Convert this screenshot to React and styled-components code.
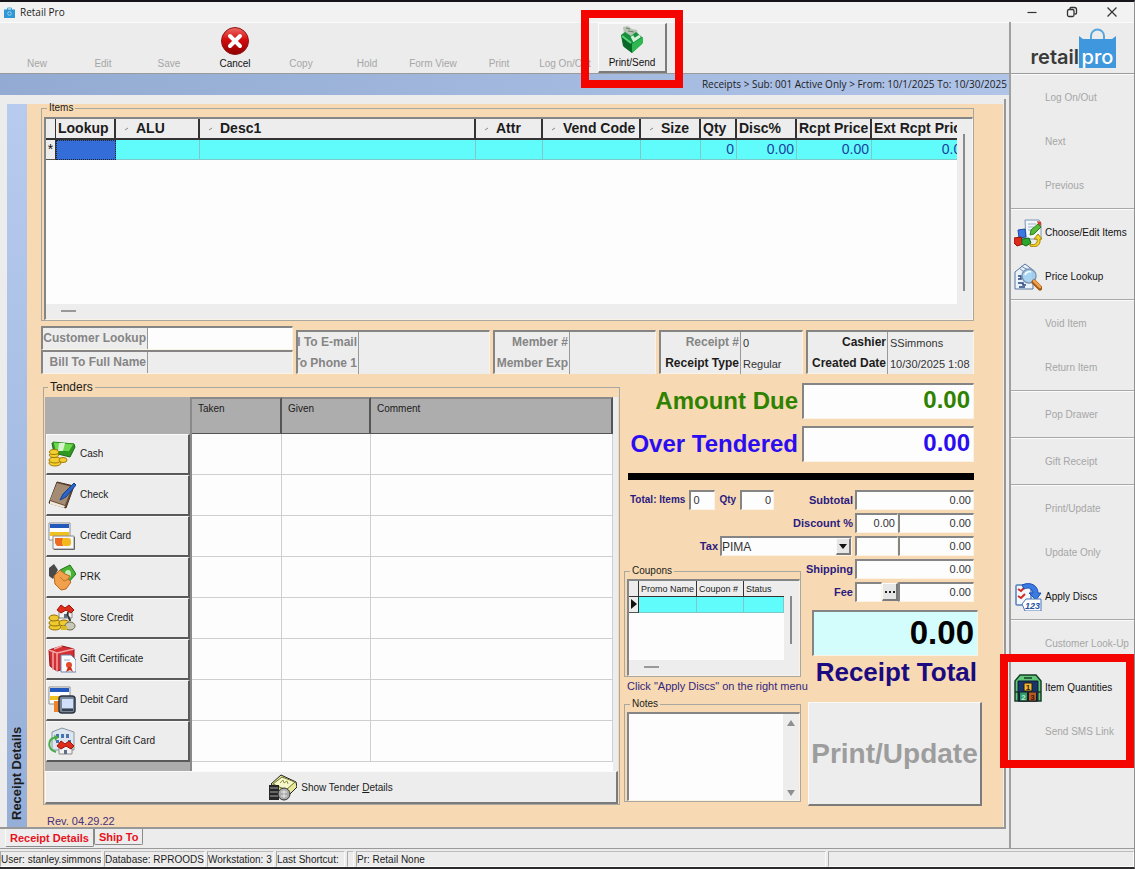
import React from "react";
import styled, { createGlobalStyle, css } from "styled-components";

const GlobalStyle = createGlobalStyle`
  * {
    box-sizing: border-box;
  }
  body {
    margin: 0;
    background: #ececec;
    color: #1c1c1c;
    font-family: "Liberation Sans", Arial, sans-serif;
    font-size: 10px;
    line-height: 12px;
  }
  button, input, select, textarea {
    font: inherit;
    color: inherit;
    border-radius: 0;
    margin: 0;
  }
`;

const toolbarItems = [
  { label: "New" },
  { label: "Edit" },
  { label: "Save" },
  { label: "Cancel", icon: CancelIcon },
  { label: "Copy" },
  { label: "Hold" },
  { label: "Form View" },
  { label: "Print" },
  { label: "Log On/Out" },
  { label: "Print/Send", icon: PrintSendIcon, raised: true, marked: true },
];

const sideGroups = [
  [{ label: "Log On/Out" }, { label: "Next" }, { label: "Previous" }],
  [
    { label: "Choose/Edit Items", icon: ChooseIcon },
    { label: "Price Lookup", icon: PriceIcon },
  ],
  [{ label: "Void Item" }, { label: "Return Item" }],
  [{ label: "Pop Drawer" }],
  [{ label: "Gift Receipt" }],
  [
    { label: "Print/Update" },
    { label: "Update Only" },
    { label: "Apply Discs", icon: DiscsIcon },
  ],
];

const itemColumns = [
  { label: "Lookup", width: 60 },
  { label: "ALU", width: 84, sortable: true },
  { label: "Desc1", sortable: true },
  { label: "Attr", width: 67, sortable: true },
  { label: "Vend Code", width: 98, sortable: true },
  { label: "Size", width: 60, sortable: true },
  { label: "Qty", width: 36, value: "0" },
  { label: "Disc%", width: 60, value: "0.00" },
  { label: "Rcpt Price", width: 75, value: "0.00" },
  { label: "Ext Rcpt Price", width: 100, value: "0.00" },
];

const tenders = [
  { label: "Cash", icon: CashIcon },
  { label: "Check", icon: CheckIcon },
  { label: "Credit Card", icon: CreditIcon },
  { label: "PRK", icon: HandIcon },
  { label: "Store Credit", icon: StoreCreditIcon },
  { label: "Gift Certificate", icon: GiftIcon },
  { label: "Debit Card", icon: DebitIcon },
  { label: "Central Gift Card", icon: CentralIcon },
];

const infoBoxes = [
  {
    width: 194,
    labelWidth: 61,
    rows: [
      { id: "email", label: "Bill To E-mail", value: "" },
      { id: "phone", label: "Bill To Phone 1", value: "" },
    ],
  },
  {
    width: 163,
    labelWidth: 75,
    rows: [
      { id: "member", label: "Member #", value: "" },
      { id: "member-exp", label: "Member Exp", value: "" },
    ],
  },
  {
    width: 144,
    labelWidth: 80,
    rows: [
      { id: "receipt", label: "Receipt #", value: "0" },
      { id: "receipt-type", label: "Receipt Type", value: "Regular", dark: true },
    ],
  },
  {
    width: 168,
    labelWidth: 80,
    rows: [
      { id: "cashier", label: "Cashier", value: "SSimmons", dark: true },
      { id: "created", label: "Created Date", value: "10/30/2025 1:08", dark: true },
    ],
  },
];

const statusCells = [
  { text: "User: stanley.simmons", width: 102 },
  { text: "Database: RPROODS", width: 101 },
  { text: "Workstation: 3", width: 67 },
  { text: "Last Shortcut:", width: 69 },
  { text: "", width: 7 },
  { text: "Pr: Retail None" },
  { text: "", width: 306 },
];

function App() {
  return (
    <Window>
      <GlobalStyle />
      <TitleBar>
        <BagIcon />
        <Title>Retail Pro</Title>
        <WindowButton aria-label="Minimize">
          <svg width="12" height="12" viewBox="0 0 12 12">
            <path d="M1.500 6.500h9" stroke="#333" strokeWidth="1.200" />
          </svg>
        </WindowButton>
        <WindowButton aria-label="Restore">
          <svg width="12" height="12" viewBox="0 0 12 12" fill="none" stroke="#333" strokeWidth="1.300">
            <rect x="1.500" y="3.500" width="6.500" height="7" rx="1.500" />
            <path d="M4 3.200V2.500a1 1 0 0 1 1-1h3.500a2 2 0 0 1 2 2V7a1 1 0 0 1-1 1H8.500" />
          </svg>
        </WindowButton>
        <WindowButton aria-label="Close">
          <svg width="12" height="12" viewBox="0 0 12 12">
            <path d="M1.500 1.500l9 9M10.500 1.500l-9 9" stroke="#333" strokeWidth="1.200" />
          </svg>
        </WindowButton>
      </TitleBar>
      <Body>
        <Main>
          <Toolbar>
            {toolbarItems.map(({ label, icon: Icon, raised, marked }) => (
              <ToolButton key={label} $raised={raised} disabled={!Icon}>
                {Icon && <Icon />}
                <span>{label}</span>
                {marked && <ToolMark />}
              </ToolButton>
            ))}
          </Toolbar>
          <Breadcrumb>
            Receipts &gt; Sub: 001 Active Only &gt; From: 10/1/2025 To: 10/30/2025
          </Breadcrumb>
          <Frame>
            <Sheet>
              <SideTitle>Receipt Details</SideTitle>
              <Form>
                <ItemsPanel />
                <CustomerInfo />
                <Lower>
                  <TendersPanel />
                  <Summary />
                </Lower>
                <Revision>Rev. 04.29.22</Revision>
              </Form>
            </Sheet>
            <Tabs>
              <Tab $active>Receipt Details</Tab>
              <Tab>Ship To</Tab>
            </Tabs>
          </Frame>
        </Main>
        <Sidebar />
      </Body>
      <StatusBar>
        {statusCells.map((cell, i) => (
          <StatusCell key={i} $width={cell.width}>
            {cell.text}
          </StatusCell>
        ))}
      </StatusBar>
    </Window>
  );
}

function ItemsPanel() {
  return (
    <ItemsGroup>
      <Legend>Items</Legend>
      <GridBox $height={203}>
        <GridMain>
          <GridClip>
            <ItemsTable>
              <colgroup>
                <col width={10} />
                {itemColumns.map((c) => (
                  <col key={c.label} width={c.width} />
                ))}
              </colgroup>
              <thead>
                <tr>
                  <th aria-label="Row" />
                  {itemColumns.map((c) => (
                    <th key={c.label} scope="col">
                      {c.sortable && <SortMark />}
                      {c.label}
                    </th>
                  ))}
                </tr>
              </thead>
              <tbody>
                <tr>
                  <td>*</td>
                  {itemColumns.map((c) => (
                    <td key={c.label}>{c.value}</td>
                  ))}
                </tr>
              </tbody>
            </ItemsTable>
          </GridClip>
          <HScroll />
        </GridMain>
        <VScroll $top={15} $height={157} />
      </GridBox>
    </ItemsGroup>
  );
}

function CustomerInfo() {
  return (
    <InfoRow>
      <CustomerBoxes>
        <InfoBox>
          <InfoLine>
            <InfoLabel htmlFor="customer" $width={105}>Customer Lookup</InfoLabel>
            <InfoInput id="customer" $white />
          </InfoLine>
        </InfoBox>
        <InfoBox>
          <InfoLine>
            <InfoLabel htmlFor="bill-name" $width={105}>Bill To Full Name</InfoLabel>
            <InfoInput id="bill-name" readOnly />
          </InfoLine>
        </InfoBox>
      </CustomerBoxes>
      {infoBoxes.map((box) => (
        <InfoBox key={box.rows[0].id} $width={box.width} $low>
          {box.rows.map((row) => (
            <InfoLine key={row.id}>
              <InfoLabel htmlFor={row.id} $width={box.labelWidth} $dark={row.dark}>
                {row.label}
              </InfoLabel>
              <InfoInput id={row.id} defaultValue={row.value} readOnly />
            </InfoLine>
          ))}
        </InfoBox>
      ))}
    </InfoRow>
  );
}

function TendersPanel() {
  return (
    <TendersGroup>
      <Legend $large>Tenders</Legend>
      <TenderBody>
        <TenderButtons>
          {tenders.map(({ label, icon: Icon }) => (
            <TenderButton key={label}>
              <Icon />
              {label}
            </TenderButton>
          ))}
        </TenderButtons>
        <TenderTable>
          <colgroup>
            <col width={90} />
            <col width={89} />
            <col />
          </colgroup>
          <thead>
            <tr>
              <th scope="col">Taken</th>
              <th scope="col">Given</th>
              <th scope="col">Comment</th>
            </tr>
          </thead>
          <tbody>
            {tenders.map((t) => (
              <tr key={t.label}>
                <td />
                <td />
                <td />
              </tr>
            ))}
          </tbody>
        </TenderTable>
      </TenderBody>
      <ShowTenders>
        <TenderDetailsIcon />
        <span>
          Show Tender <u>D</u>etails
        </span>
      </ShowTenders>
    </TendersGroup>
  );
}

function Summary() {
  return (
    <SummaryColumn>
      <Totals>
        <BigRow $color="#2f8200">
          <label htmlFor="due">Amount Due</label>
          <BigInput id="due" defaultValue="0.00" />
        </BigRow>
        <BigRow $color="#2a0df0">
          <label htmlFor="over">Over Tendered</label>
          <BigInput id="over" defaultValue="0.00" />
        </BigRow>
        <Bar />
        <FieldRow>
          <CountFields>
            <label htmlFor="items">Total: Items</label>
            <Field id="items" defaultValue="0" $width={26} $left />
            <label htmlFor="qty">Qty</label>
            <Field id="qty" defaultValue="0" $width={34} />
          </CountFields>
          <FieldLabel htmlFor="subtotal">Subtotal</FieldLabel>
          <Field id="subtotal" defaultValue="0.00" $width={119} />
        </FieldRow>
        <FieldRow>
          <FieldLabel htmlFor="disc-pct">Discount %</FieldLabel>
          <Field id="disc-pct" defaultValue="0.00" $width={43} />
          <Field aria-label="Discount" defaultValue="0.00" $width={76} />
        </FieldRow>
        <FieldRow>
          <FieldLabel htmlFor="tax">Tax</FieldLabel>
          <SelectBox>
            <TaxSelect id="tax">
              <option>PIMA</option>
            </TaxSelect>
            <SelectArrow>
              <svg width="8" height="5" viewBox="0 0 8 5">
                <path d="M0 0h8L4 5z" fill="#111" />
              </svg>
            </SelectArrow>
          </SelectBox>
          <Field aria-label="Tax percent" $width={43} />
          <Field aria-label="Tax amount" defaultValue="0.00" $width={76} />
        </FieldRow>
      </Totals>
      <SummarySplit>
        <SplitLeft>
          <SmallGroup>
            <Legend>Coupons</Legend>
            <GridBox $height={97}>
              <GridMain>
                <GridClip>
                  <CouponTable>
                    <colgroup>
                      <col width={10} />
                      <col width={58} />
                      <col width={47} />
                      <col />
                    </colgroup>
                    <thead>
                      <tr>
                        <th aria-label="Row" />
                        <th scope="col">Promo Name</th>
                        <th scope="col">Coupon #</th>
                        <th scope="col">Status</th>
                      </tr>
                    </thead>
                    <tbody>
                      <tr>
                        <td>
                          <svg width="6" height="10" viewBox="0 0 6 10">
                            <path d="M0 0l6 5-6 5z" fill="#111" />
                          </svg>
                        </td>
                        <td />
                        <td />
                        <td />
                      </tr>
                    </tbody>
                  </CouponTable>
                </GridClip>
                <HScroll />
              </GridMain>
              <VScroll $top={15} $height={48} />
            </GridBox>
          </SmallGroup>
          <Hint>Click "Apply Discs" on the right menu</Hint>
          <SmallGroup>
            <Legend id="notes-label">Notes</Legend>
            <NotesBox>
              <Notes aria-labelledby="notes-label" />
              <NotesScroll>
                <svg width="8" height="6" viewBox="0 0 8 6">
                  <path d="M0 6l4-6 4 6z" fill="#8f8f8f" />
                </svg>
                <svg width="8" height="6" viewBox="0 0 8 6">
                  <path d="M0 0l4 6 4-6z" fill="#8f8f8f" />
                </svg>
              </NotesScroll>
            </NotesBox>
          </SmallGroup>
        </SplitLeft>
        <SplitRight>
          <Fees>
            <FieldRow>
              <FieldLabel htmlFor="shipping">Shipping</FieldLabel>
              <Field id="shipping" defaultValue="0.00" $width={119} />
            </FieldRow>
            <FieldRow>
              <FieldLabel htmlFor="fee">Fee</FieldLabel>
              <Field aria-label="Fee type" $width={27} />
              <MoreButton aria-label="Choose fee">
                <svg width="10" height="2" viewBox="0 0 10 2">
                  <path d="M0 0h2v2H0zM4 0h2v2H4zM8 0h2v2H8z" fill="#222" />
                </svg>
              </MoreButton>
              <Field id="fee" defaultValue="0.00" $width={76} />
            </FieldRow>
          </Fees>
          <TotalInput id="total" defaultValue="0.00" />
          <TotalLabel htmlFor="total">Receipt Total</TotalLabel>
          <UpdateButton disabled>Print/Update</UpdateButton>
        </SplitRight>
      </SummarySplit>
    </SummaryColumn>
  );
}

function Sidebar() {
  return (
    <Side>
      <Logo>
        <span>retail</span>
        <LogoBag>
          <svg width="37" height="14" viewBox="0 0 37 14">
            <path d="M12 12V8a6.500 6.500 0 0 1 13 0v4" fill="none" stroke="#56a6e0" strokeWidth="2" />
            <path d="M0 14V8l4 3h29l4-3v6z" fill="#3f98dd" />
          </svg>
          <span>pro</span>
        </LogoBag>
      </Logo>
      {sideGroups.map((group) => (
        <SideGroup key={group[0].label}>
          {group.map((item) => (
            <SideItem key={item.label} {...item} />
          ))}
        </SideGroup>
      ))}
      <SideGroup $last>
        <SideItem label="Customer Look-Up" />
        <MarkedItems>
          <SideItem label="Item Quantities" icon={QuantityIcon} />
          <SideItem label="Send SMS Link" />
          <SideMark />
        </MarkedItems>
      </SideGroup>
    </Side>
  );
}

function SideItem({ label, icon: Icon }) {
  return (
    <SideButton disabled={!Icon}>
      <SideIcon>{Icon && <Icon />}</SideIcon>
      {label}
    </SideButton>
  );
}

/* ---------- icons ---------- */

function Art({ children }) {
  return (
    <svg width="28" height="28" viewBox="0 0 28 28" aria-hidden="true">
      {children}
    </svg>
  );
}

function SortMark() {
  return (
    <SortSvg width="5" height="5" viewBox="0 0 5 5">
      <path d="M1 4l3-2" stroke="#888" />
    </SortSvg>
  );
}

function BagIcon() {
  return (
    <svg width="11" height="11" viewBox="0 0 11 11" aria-hidden="true">
      <path d="M3.500 3V1h4v2" fill="none" stroke="#4aa8de" />
      <path d="M0 2.500h11V11H0z" fill="#2f97d4" />
      <circle cx="5.500" cy="6.500" r="1.800" fill="none" stroke="#9bd2f2" />
    </svg>
  );
}

function CancelIcon() {
  return (
    <Art>
      <defs>
        <linearGradient id="cancel-red" x1="0" y1="0" x2="0" y2="1">
          <stop offset="0" stopColor="#ee6b66" />
          <stop offset="0.450" stopColor="#d40d0d" />
          <stop offset="1" stopColor="#8e0000" />
        </linearGradient>
      </defs>
      <circle cx="14" cy="14" r="13.500" fill="url(#cancel-red)" stroke="#8d1515" />
      <path d="M9 9l10 10M19 9L9 19" stroke="#fff" strokeWidth="4" strokeLinecap="round" />
    </Art>
  );
}

function PrintSendIcon() {
  return (
    <Art>
      <path d="M5 1l5-1 4 3 5 1 1 5-9 3-5-4z" fill="#b5c4b4" />
      <path d="M8 2l4 1M10 5l6 1" stroke="#6c7d6b" />
      <path d="M3 9l4-3 6 4 5-4 7 6-1 6-10 9-8-6z" fill="#15913a" />
      <path d="M3 9l11 9v9l-9-7z" fill="#0a6a29" />
      <path d="M14 18l11-7v6l-11 10z" fill="#2db950" />
      <path d="M14 10l2 4 6-4" stroke="#d4f0d9" strokeWidth="3" fill="none" />
      <path d="M4 10l9 7" stroke="#5bd27c" strokeWidth="2" />
    </Art>
  );
}

function ChooseIcon() {
  return (
    <Art>
      <path d="M11 1h14l2 3v16H12z" fill="#f3f7fc" stroke="#7f94b2" />
      <path d="M14 5h8M14 8h6M14 11h4" stroke="#9fb1c9" />
      <path d="M23 2l4 1v4l-3-2z" fill="#d73d2a" />
      <path d="M16 16l1-5 7-6 3 3-7 7z" fill="#55bb38" stroke="#2d7d1a" />
      <path d="M4 11l7-1 1 8-7 1z" fill="#3b78e0" stroke="#1d4ca8" />
      <path d="M0 19l7-1 2 7-6 2-3-3z" fill="#dc2a1c" stroke="#971308" />
      <path d="M8 20l7-1 2 5-5 3-4-2z" fill="#2da52c" stroke="#136a13" />
      <path d="M16 25c5 2 8-1 7-5h-3l4-5 4 5h-2c1 7-5 9-10 7z" fill="#f4d32b" stroke="#a98405" />
    </Art>
  );
}

function PriceIcon() {
  return (
    <Art>
      <path d="M1 9l10-8 8 6v19H1z" fill="#eaf2fb" stroke="#56769f" />
      <path d="M5 5l5 4 8-2M7 3l7 4" stroke="#6c8bb0" fill="none" />
      <path d="M4 13h3v3H4M4 20h5v2h3M5 24h6" stroke="#27457c" fill="none" strokeWidth="1.500" />
      <circle cx="15" cy="13" r="7" fill="#9fd0f1" fillOpacity="0.900" stroke="#7c96b4" strokeWidth="1.500" />
      <path d="M11 12c1-3 4-4 6-3" stroke="#fff" fill="none" strokeWidth="1.500" />
      <path d="M20 19l6 6" stroke="#a35816" strokeWidth="5" strokeLinecap="round" />
      <path d="M20 18l6 6" stroke="#efa24c" strokeWidth="2.500" strokeLinecap="round" />
    </Art>
  );
}

function DiscsIcon() {
  return (
    <Art>
      <rect x="2" y="2" width="15" height="20" rx="1" fill="#f2f7fd" stroke="#5480bd" strokeWidth="1.500" />
      <path d="M4 6l3 2 4-4M4 13l3 2 4-4" stroke="#d22b1f" strokeWidth="2" fill="none" />
      <path d="M8 2c9-4 16 1 16 8h3l-5 7-7-7h4c-1-5-5-6-9-4z" fill="#3b7be2" stroke="#1d4fb0" />
      <path d="M8 21l4-5h15v12H11z" fill="#fff" stroke="#4d75b7" />
      <text x="11" y="26" fontSize="9" fontStyle="italic" fontWeight="700" fill="#2450a4">123</text>
    </Art>
  );
}

function QuantityIcon() {
  return (
    <Art>
      <path d="M1 27V7l5-6h16l5 6v20z" fill="#63c97a" stroke="#163f26" strokeWidth="1.500" />
      <path d="M10 4h8M1 18h3M24 18h3" stroke="#163f26" strokeWidth="1.500" />
      <path d="M4 7h20v20H4z" fill="#1a356b" stroke="#101d33" />
      <path d="M10 9h8v8h-8z" fill="#f3b82c" stroke="#1c1c1c" />
      <path d="M5.500 18h8v9h-8z" fill="#2f9c71" stroke="#1c1c1c" />
      <path d="M14.500 18h8v9h-8z" fill="#b5592a" stroke="#1c1c1c" />
      <g fontSize="8" fontWeight="700" textAnchor="middle">
        <text x="14" y="16" fill="#222">1</text>
        <text x="9.500" y="26" fill="#b8f0cc">2</text>
        <text x="18.500" y="26" fill="#401808">3</text>
      </g>
    </Art>
  );
}

function CashIcon() {
  return (
    <Art>
      <path d="M4 3l22 1 1 3-5 10-16-4z" fill="#2f9a22" stroke="#1c6b14" />
      <path d="M5 2l21 2-5 8-14-2z" fill="#6cd84f" stroke="#2f8d20" />
      <path d="M11 3h6l-2 8h-5z" fill="#d9f3cf" />
      <g fill="#f3cf30" stroke="#a3790a">
        <ellipse cx="7" cy="23" rx="6" ry="3" />
        <ellipse cx="7" cy="20" rx="6" ry="3" />
        <ellipse cx="6" cy="15" rx="4.500" ry="2.500" />
        <ellipse cx="6" cy="12" rx="4.500" ry="2.500" />
        <ellipse cx="15" cy="20" rx="4" ry="2.500" />
      </g>
    </Art>
  );
}

function CheckIcon() {
  return (
    <Art>
      <path d="M9 1l17 4-8 22-17-5z" fill="#6b4d35" stroke="#45301f" />
      <path d="M9 2l15 4-7 18-15-5z" fill="#a48c74" />
      <path d="M2 20l15 5-1 2-14-4z" fill="#f1e8da" />
      <path d="M12 19l3-6L26 2l2 2-10 12z" fill="#2c63c9" stroke="#173f8c" />
    </Art>
  );
}

function CardArt() {
  return (
    <>
      <path d="M1 1h21v17H1z" fill="#fff" stroke="#8d8d8d" />
      <path d="M2 2h19v4H2z" fill="#2358bd" />
      <path d="M2 10h19v4H2z" fill="#f0bf20" />
    </>
  );
}

function CreditIcon() {
  return (
    <Art>
      <CardArt />
      <path d="M5 14h21v13H5z" fill="#f6f6f6" stroke="#8b8b8b" />
      <path d="M26.500 15v12.500H6" fill="none" stroke="#666" />
      <path d="M7 16h8v8H9l-2-3z" fill="#ee6a21" />
      <rect x="14" y="16" width="9" height="8" rx="3" fill="#f3b81e" />
    </Art>
  );
}

function DebitIcon() {
  return (
    <Art>
      <CardArt />
      <path d="M6 15h6v11H6z" fill="#ef8126" />
      <rect x="11" y="10" width="16" height="17" rx="3" fill="#79879a" stroke="#2b3340" strokeWidth="1.500" />
      <path d="M14 13h11v9H14z" fill="#cfe0f8" />
      <path d="M14 24h11" stroke="#222b38" strokeWidth="1.500" />
    </Art>
  );
}

function HandIcon() {
  return (
    <Art>
      <path d="M12 7l10-5 6 9-9 10z" fill="#48b436" stroke="#1e7215" />
      <ellipse cx="20" cy="11" rx="3" ry="4" fill="#c4ecb9" />
      <path d="M1 5l5-4 4 6-5 9-4-3z" fill="#4a4a4a" />
      <path d="M6 13l6-6 5 4 5 2-2 3 3 3-5 7-5 1-6-6z" fill="#f1a04b" stroke="#bb6820" />
      <path d="M12 14l4 4 5-2" stroke="#c1752d" fill="none" />
    </Art>
  );
}

function House({ x = 0, y = 0 }) {
  return (
    <g transform={`translate(${x} ${y})`}>
      <path d="M2 5h13v8H2z" fill="#f2f2f2" stroke="#8c8c8c" />
      <path d="M0 5l4-5 4 3 4-3 5 5-3 3-5-3-5 3z" fill="#e02d1b" stroke="#9d1206" />
      <path d="M7 9h3v4H7z" fill="#5c6f87" />
    </g>
  );
}

function StoreCreditIcon() {
  return (
    <Art>
      <House x={9} y={1} />
      <g fill="#eec930" stroke="#947006">
        <ellipse cx="7" cy="23" rx="6" ry="3" />
        <ellipse cx="7" cy="19" rx="6" ry="3" />
        <ellipse cx="6" cy="14" rx="5" ry="3" />
        <ellipse cx="16" cy="19" rx="5" ry="3" />
      </g>
      <path d="M20 8c-2 5 2 5 2 9" stroke="#333" strokeWidth="2" fill="none" />
      <ellipse cx="22" cy="22" rx="5" ry="4" fill="#c9c9b8" stroke="#696950" />
      <path d="M13 24h6" stroke="#dabc22" strokeWidth="4" />
    </Art>
  );
}

function GiftIcon() {
  return (
    <Art>
      <path d="M1 5l13-4 12 3v17l-17 5-7-5z" fill="#d23035" stroke="#951317" />
      <path d="M1 5l8 3v18M9 8l17-4M5 6v19M14 1l-8 3" stroke="#f5a3a3" fill="none" strokeWidth="1.500" />
      <path d="M13 10h10l5 5v12H13z" fill="#f8fbff" stroke="#6e86ab" />
      <path d="M16 15h6" stroke="#9eb2cd" />
      <circle cx="21" cy="20" r="3" fill="#e5482a" />
      <path d="M18 27l2-5h3l2 5-3-2z" fill="#cf2e14" />
    </Art>
  );
}

function CentralIcon() {
  return (
    <Art>
      <path d="M4 5l10-4 12 4v18H4z" fill="#dde6ee" stroke="#8796a5" />
      <path d="M8 7h3v4H8zM13 7h3v4h-3zM18 7h3v4h-3zM8 13h3v3H8zM20 13h3v3h-3z" fill="#4674b0" />
      <House x={9} y={14} />
      <path d="M8 25c-9-3-9-13 0-15" stroke="#48ad47" strokeWidth="2" fill="none" />
      <path d="M6 8l5 2-4 4z" fill="#48ad47" />
    </Art>
  );
}

function TenderDetailsIcon() {
  return (
    <Art>
      <path d="M2 10L12 1l15 7 1 5-10 10z" fill="#e6e89a" stroke="#222" />
      <path d="M4 10L13 3l13 5-9 8z" fill="#f5f7c8" stroke="#6d6f2c" />
      <path d="M11 9l3-3 1 3 3-2 1 3" stroke="#92954a" fill="none" />
      <path d="M0 11h10v15H0z" fill="#262626" />
      <path d="M1 14h8M1 18h8M1 22h8" stroke="#a8a8a8" />
      <circle cx="15" cy="20" r="6" fill="#aaa" stroke="#333" />
      <path d="M15 16v8M12 18h6M12 22h6" stroke="#e8e8e8" />
    </Art>
  );
}

/* ---------- styles ---------- */

const sunken = css`
  border: 1px solid #fbf3e6;
  border-top: 2px solid #858585;
  border-left: 2px solid #858585;
`;

const raised = css`
  border: 1px solid #fafafa;
  border-right: 2px solid #7b7b7b;
  border-bottom: 2px solid #7b7b7b;
`;

const Window = styled.div`
  display: flex;
  flex-direction: column;
  min-height: 100vh;
  border-top: 2px solid #17151a;
  border-bottom: 2px solid #2b292c;
  border-right: 1px solid #8f8f8f;
  background: #ececec;
`;

const TitleBar = styled.header`
  display: flex;
  align-items: center;
  height: 20px;
  padding: 0 2px 0 4px;
  background: #f2f2f2;
  font-family: "Open Sans", sans-serif;
`;

const Title = styled.h1`
  flex: 1;
  margin: 0;
  padding-left: 5px;
  font-size: 10px;
  font-weight: 400;
`;

const WindowButton = styled.button`
  display: flex;
  align-items: center;
  justify-content: center;
  width: 40px;
  height: 18px;
  padding: 0;
  border: 0;
  background: none;
`;

const Body = styled.div`
  display: flex;
  flex: 1;
`;

const Main = styled.main`
  display: flex;
  flex: 1;
  flex-direction: column;
  min-width: 0;
`;

const Toolbar = styled.nav`
  display: flex;
  height: 52px;
  padding-left: 4px;
  border-top: 1px solid #fbfbfb;
  border-bottom: 1px solid #9a9a9a;
`;

const ToolButton = styled.button`
  position: relative;
  display: flex;
  flex: 0 0 ${({ $raised }) => ($raised ? 69 : 66)}px;
  flex-direction: column;
  align-items: center;
  justify-content: flex-end;
  gap: 3px;
  padding: 0 0 3px;
  border: 0;
  background: none;
  color: #111;
  white-space: nowrap;
  ${({ $raised }) =>
    $raised &&
    css`
      ${raised}
      padding-bottom: 2px;
    `}
  &:disabled {
    color: #a6a6a6;
  }
`;

const ToolMark = styled.span`
  position: absolute;
  inset: -14px -18px -17px -18px;
  border: 8px solid #f40500;
  pointer-events: none;
`;

const Breadcrumb = styled.div`
  height: 21px;
  padding-right: 2px;
  background: linear-gradient(90deg, #93abd2, #b0c4e8);
  font: 10px/21px "Open Sans", sans-serif;
  text-align: right;
`;

const Frame = styled.div`
  display: flex;
  flex: 1;
  flex-direction: column;
  padding: 4px 3px 1px 0;
`;

const Sheet = styled.div`
  display: flex;
  flex: 1;
  padding: 5px 1px 0 7px;
  border-right: 2px solid #989898;
  border-bottom: 2px solid #989898;
`;

const SideTitle = styled.h2`
  flex: 0 0 20px;
  margin: 0;
  padding: 7px 0;
  background: linear-gradient(#96afd8, #b7cbee);
  font-size: 13px;
  line-height: 20px;
  writing-mode: vertical-rl;
  transform: rotate(180deg);
`;

const Form = styled.section`
  display: flex;
  flex: 1;
  flex-direction: column;
  min-width: 0;
  background: #f7dab3;
`;

const Group = styled.fieldset`
  min-width: 0;
  margin: 0;
  border: 1px solid #a8a8a0;
`;

const Legend = styled.legend`
  margin-left: 3px;
  padding: 0 2px;
  font-size: ${({ $large }) => ($large ? 12 : 10)}px;
  line-height: ${({ $large }) => ($large ? 12 : 8)}px;
`;

const ItemsGroup = styled(Group)`
  margin: 0 29px 0 14px;
  padding: 5px 0 0 2px;
`;

const GridBox = styled.div`
  ${sunken}
  display: flex;
  height: ${({ $height }) => $height}px;
  background: #ededed;
`;

const GridMain = styled.div`
  display: flex;
  flex: 1;
  flex-direction: column;
  min-width: 0;
`;

const GridClip = styled.div`
  flex: 1;
  overflow: hidden;
  background: #fdfdfd;
`;

const HScroll = styled.div`
  height: 15px;
  padding: 6px 0 0 15px;
  &::before {
    content: "";
    display: block;
    width: 15px;
    height: 2px;
    background: #999;
  }
`;

const VScroll = styled.div`
  width: 15px;
  padding: ${({ $top }) => $top}px 0 0 6px;
  &::before {
    content: "";
    display: block;
    width: 2px;
    height: ${({ $height }) => $height}px;
    background: #8a8a8a;
  }
`;

const DataTable = styled.table`
  border-collapse: separate;
  border-spacing: 0;
  table-layout: fixed;
  th,
  td {
    overflow: hidden;
    white-space: nowrap;
  }
  th {
    background: #ededed;
    text-align: left;
  }
  td {
    background: #60fcfc;
    border-right: 1px solid #7cc9c9;
    border-bottom: 1px solid #7cc9c9;
  }
  td:first-child {
    padding: 0 1px;
    background: #ededed;
    border-right: 1px solid #333;
    border-bottom: 1px solid #555;
    color: #111;
    text-align: center;
  }
`;

const ItemsTable = styled(DataTable)`
  width: calc(100% + 15px);
  font-size: 14px;
  th {
    height: 21px;
    padding: 0 0 0 2px;
    border-right: 2px solid #333;
    border-bottom: 2px solid #333;
    line-height: 19px;
  }
  th:first-child {
    border-right-width: 1px;
  }
  td {
    height: 20px;
    padding: 0 2px;
    color: #1d3f9e;
    line-height: 19px;
    text-align: right;
  }
  td:nth-child(2) {
    border: 1px dotted #222;
    background: #346cd8;
  }
`;

const SortSvg = styled.svg`
  margin: 0 7px 2px 6px;
`;

const InfoRow = styled.div`
  display: flex;
  align-items: flex-end;
  gap: 3px;
  margin: 5px 29px 0 14px;
`;

const CustomerBoxes = styled.div`
  flex: 1 1 252px;
`;

const InfoBox = styled.div`
  ${sunken}
  flex: 1 1 ${({ $width }) => $width || 252}px;
  min-width: 0;
  height: ${({ $low }) => ($low ? 44 : 24)}px;
  background: #ededed;
`;

const InfoLine = styled.div`
  display: flex;
  height: 21px;
`;

const InfoLabel = styled.label`
  display: flex;
  flex: 0 0 ${({ $width }) => $width}px;
  justify-content: flex-end;
  overflow: hidden;
  padding-right: 1px;
  border-right: 1px solid #999;
  color: ${({ $dark }) => ($dark ? "#1c1c1c" : "#858585")};
  font-size: 12px;
  font-weight: 700;
  line-height: 21px;
  white-space: nowrap;
`;

const InfoInput = styled.input`
  flex: 1;
  min-width: 0;
  padding: 0 0 0 2px;
  border: 0;
  background: ${({ $white }) => ($white ? "#fdfdfd" : "#ededed")};
  color: #333;
  font-size: 11px;
`;

const Lower = styled.div`
  display: flex;
  gap: 4px;
  padding: 0 21px 0 16px;
`;

const TendersGroup = styled(Group)`
  flex: 1;
  align-self: flex-start;
  margin-top: 7px;
  padding: 4px 1px 0;
`;

const TenderBody = styled.div`
  display: flex;
  height: 374px;
  border-right: 5px solid #ededed;
  background: #fdfdfd;
`;

const TenderButtons = styled.div`
  flex: 0 0 147px;
  padding: 37px 0 0 1px;
  background: #adadad;
  border-right: 2px solid #8a8a8a;
`;

const TenderButton = styled.button`
  display: flex;
  align-items: center;
  gap: 4px;
  width: 100%;
  height: 41px;
  padding: 0 3px 0 1px;
  border: 1px solid #fafafa;
  border-right: 2px solid #5a5a5a;
  border-bottom: 2px solid #5a5a5a;
  background: #ededed;
`;

const TenderTable = styled.table`
  flex: 1;
  align-self: flex-start;
  border-collapse: separate;
  border-spacing: 0;
  table-layout: fixed;
  display: table;
  width: 100%;
  th {
    height: 37px;
    padding: 4px 6px;
    border-top: 2px solid #8a8a8a;
    border-right: 2px solid #555;
    border-bottom: 1px solid #555;
    background: #adadad;
    font-weight: 400;
    text-align: left;
    vertical-align: top;
  }
  td {
    height: 41px;
    padding: 0;
    border-right: 1px solid #cfcfcf;
    border-bottom: 1px solid #cfcfcf;
  }
`;

const ShowTenders = styled.button`
  ${raised}
  display: flex;
  align-items: center;
  justify-content: center;
  gap: 4px;
  width: 100%;
  height: 33px;
  padding: 2px 0 0;
  background: #ededed;
`;

const SummaryColumn = styled.div`
  flex: 0 0 358px;
  min-width: 0;
  padding-top: 9px;
`;

const Totals = styled.div`
  padding: 0 8px 0 4px;
`;

const BigRow = styled.div`
  display: flex;
  align-items: center;
  justify-content: flex-end;
  gap: 4px;
  margin-bottom: 7px;
  color: ${({ $color }) => $color};
  font-size: 24px;
  font-weight: 700;
  white-space: nowrap;
`;

const BigInput = styled.input`
  ${sunken}
  width: 172px;
  height: 36px;
  padding: 0 3px 4px;
  background: #fdfdfd;
  line-height: 28px;
  text-align: right;
`;

const Bar = styled.div`
  height: 7px;
  margin: 11px 0 10px;
  background: #000;
`;

const FieldRow = styled.div`
  display: flex;
  align-items: center;
  justify-content: flex-end;
  height: 20px;
  margin-bottom: 3px;
`;

const FieldLabel = styled.label`
  padding-right: 2px;
  color: #2b1a80;
  font-size: 11px;
  font-weight: 700;
`;

const Field = styled.input`
  ${sunken}
  width: ${({ $width }) => $width}px;
  height: 20px;
  padding: 0 2px 2px;
  background: #fdfdfd;
  color: #333;
  font-size: 11px;
  font-weight: 400;
  text-align: ${({ $left }) => ($left ? "left" : "right")};
`;

const CountFields = styled.div`
  display: flex;
  align-items: center;
  gap: 4px;
  margin-right: auto;
  padding-left: 2px;
  color: #2b1a80;
  font-weight: 700;
`;

const SelectBox = styled.div`
  ${sunken}
  display: flex;
  width: 132px;
  height: 20px;
  margin-right: 3px;
  background: #fdfdfd;
`;

const TaxSelect = styled.select`
  flex: 1;
  padding: 0;
  border: 0;
  background: none;
  color: #333;
  font-size: 12px;
  appearance: none;
`;

const SelectArrow = styled.span`
  ${raised}
  display: flex;
  align-items: center;
  justify-content: center;
  width: 15px;
  background: #e6e6e6;
  pointer-events: none;
`;

const SummarySplit = styled.div`
  display: flex;
`;

const SplitLeft = styled.div`
  flex: 0 0 177px;
  min-width: 0;
  padding-top: 8px;
`;

const SmallGroup = styled(Group)`
  padding: 4px 0 0 2px;
`;

const CouponTable = styled(DataTable)`
  width: 100%;
  font-size: 9px;
  th {
    height: 16px;
    padding: 0 0 0 2px;
    border-right: 1px solid #333;
    border-bottom: 1px solid #333;
    font-weight: 400;
  }
  th:last-child {
    border-right: 0;
  }
  td {
    height: 16px;
    line-height: 10px;
  }
`;

const Hint = styled.p`
  margin: 2px 0 7px;
  padding-left: 3px;
  color: #33267e;
  font-size: 11px;
  line-height: 14px;
  white-space: nowrap;
`;

const NotesBox = styled.div`
  ${sunken}
  display: flex;
  height: 89px;
  background: #ededed;
`;

const Notes = styled.textarea`
  flex: 1;
  min-width: 0;
  padding: 2px;
  border: 0;
  background: #fdfdfd;
  resize: none;
`;

const NotesScroll = styled.div`
  display: flex;
  flex-direction: column;
  align-items: center;
  justify-content: space-between;
  width: 16px;
  padding: 6px 0 4px;
`;

const SplitRight = styled.div`
  display: flex;
  flex: 1;
  flex-direction: column;
  align-items: flex-end;
`;

const Fees = styled.div`
  padding-right: 8px;
`;

const MoreButton = styled.button`
  ${raised}
  display: flex;
  align-items: flex-end;
  justify-content: center;
  width: 16px;
  height: 18px;
  padding: 0 0 6px;
  background: #e6e6e6;
`;

const TotalInput = styled.input`
  ${sunken}
  width: 166px;
  height: 46px;
  margin: 5px 4px 0 0;
  padding: 0 3px 2px;
  background: #d3fcfd;
  color: #000;
  font-size: 33px;
  font-weight: 700;
  text-align: right;
`;

const TotalLabel = styled.label`
  margin: 1px 5px 15px 0;
  color: #1b0a80;
  font-size: 26px;
  font-weight: 700;
  line-height: 30px;
  white-space: nowrap;
`;

const UpdateButton = styled.button`
  ${raised}
  width: 174px;
  height: 104px;
  padding: 0;
  background: #ededed;
  font-size: 28px;
  font-weight: 700;
  white-space: nowrap;
  &:disabled {
    color: #9d9d9d;
  }
`;

const Revision = styled.p`
  margin: auto 0 0;
  padding-left: 20px;
  color: #43307f;
  font-size: 11px;
  line-height: 12px;
`;

const Tabs = styled.div`
  display: flex;
  align-items: flex-start;
  padding-left: 5px;
`;

const Tab = styled.button`
  height: ${({ $active }) => ($active ? 18 : 16)}px;
  padding: 0 4px;
  border: 1px solid #8a8a8a;
  border-top: 0;
  border-left-color: ${({ $active }) => ($active ? "#fafafa" : "#8a8a8a")};
  border-radius: 0 0 2px 2px;
  background: #ededed;
  color: #e8121c;
  font-size: 11px;
  font-weight: 700;
`;

const Side = styled.aside`
  display: flex;
  flex: 0 0 125px;
  flex-direction: column;
  border-left: 2px solid #a0a0a0;
`;

const Logo = styled.div`
  display: flex;
  align-items: flex-end;
  justify-content: flex-end;
  height: 52px;
  padding: 0 18px 5px 0;
  border-top: 1px solid #fbfbfb;
  border-bottom: 1px solid #9a9a9a;
  color: #3a3a3a;
  font: 600 20px/22px Inter, sans-serif;
`;

const LogoBag = styled.div`
  display: flex;
  flex-direction: column;
  align-items: center;
  width: 37px;
  span {
    width: 100%;
    padding-top: 4px;
    background: #3f98dd;
    color: #fff;
    font-weight: 500;
    text-align: center;
  }
`;

const SideGroup = styled.div`
  padding-top: 1px;
  border-top: 1px solid #fbfbfb;
  border-bottom: ${({ $last }) => ($last ? "0" : "1px solid #a8a8a8")};
`;

const SideButton = styled.button`
  display: flex;
  align-items: center;
  gap: 3px;
  width: 100%;
  height: 44px;
  padding: 0 0 0 3px;
  border: 0;
  background: none;
  color: #111;
  white-space: nowrap;
  &:disabled {
    color: #a6a6a6;
  }
`;

const SideIcon = styled.span`
  flex: 0 0 28px;
  height: 28px;
`;

const MarkedItems = styled.div`
  position: relative;
`;

const SideMark = styled.span`
  position: absolute;
  inset: -12px 0 -14px -11px;
  border: 8px solid #f40500;
  pointer-events: none;
`;

const StatusBar = styled.footer`
  display: flex;
  gap: 2px;
  height: 19px;
  padding-top: 2px;
  border-top: 1px solid #9a9a9a;
`;

const StatusCell = styled.div`
  flex: ${({ $width }) => ($width ? `0 0 ${$width}px` : "1")};
  overflow: hidden;
  border: 1px solid #fafafa;
  border-top-color: #bbb;
  border-left-color: #aaa;
  line-height: 16px;
  white-space: nowrap;
`;

export default App;
